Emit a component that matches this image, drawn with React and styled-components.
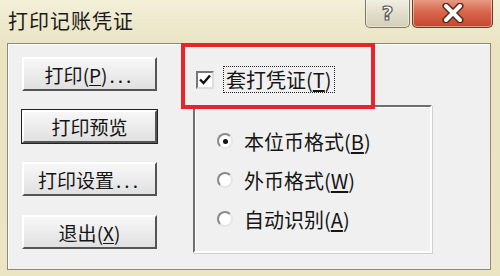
import styled, { createGlobalStyle } from "styled-components"

const GlobalStyle = createGlobalStyle`
  html, body {
    margin: 0;
    padding: 0;
    width: 500px;
    height: 276px;
    overflow: hidden;
    background: #ece6c4;
  }
  * { box-sizing: border-box; }
`

const font = `"Noto Sans CJK SC", "Noto Sans", sans-serif`

const Window = styled.div`
  position: relative;
  width: 500px;
  height: 276px;
  display: flex;
  flex-direction: column;
  background: linear-gradient(180deg, #f3efd9 0%, #e9e3c0 18%, #ebe5c4 100%);
  font-family: ${font};
  color: #151515;
`

const TitleBar = styled.div`
  height: 43px;
  display: flex;
  align-items: flex-start;
  justify-content: space-between;
  padding: 0 7px 0 8px;
`

const Title = styled.div`
  align-self: center;
  font-size: 20px;
  letter-spacing: 1px;
  margin-top: -2px;
  color: #1a1a1a;
`

const Caption = styled.div`
  display: flex;
  gap: 2px;
  margin-top: -2px;
`

const CapButton = styled.div`
  width: ${p => p.$w}px;
  height: 30px;
  display: flex;
  align-items: center;
  justify-content: center;
  border: 1px solid ${p => (p.$close ? "#6b3a2c" : "#7b7866")};
  border-top: none;
  border-radius: 0 0 5px 5px;
  background: ${p =>
    p.$close
      ? "linear-gradient(180deg, #e9a28c 0%, #d9694f 45%, #c4462c 100%)"
      : "linear-gradient(180deg, #f3f1e6 0%, #e2dfcc 50%, #d3ceb7 100%)"};
  box-shadow: inset 0 0 0 1px rgba(255,255,255,0.45);
`

const Help = styled.span`
  font-family: "DejaVu Sans", sans-serif;
  font-weight: bold;
  font-size: 20px;
  color: #fff;
  -webkit-text-stroke: 1.2px #5a5a5a;
  line-height: 1;
`

const Client = styled.div`
  flex: 1;
  margin: 0 9px 6px 7px;
  border: 1px solid #8b8a7c;
  background: #f0f0f0;
  display: flex;
  padding: 13px 0 0 14px;
  box-shadow: inset 1px 1px 0 #fff;
`

const ButtonColumn = styled.div`
  width: 135px;
  display: flex;
  flex-direction: column;
  gap: 19px;
`

const Button = styled.div`
  height: ${p => (p.$default ? 33 : 34)}px;
  display: flex;
  align-items: center;
  justify-content: center;
  font-size: 19px;
  background: linear-gradient(180deg, #f7f7f7 0%, #ececec 50%, #e0e0e0 100%);
  border: 2px solid;
  border-color: #ffffff #555 #555 #ffffff;
  outline: ${p => (p.$default ? "1px solid #222" : "none")};
  white-space: nowrap;

  u {
    text-decoration: underline;
    text-underline-offset: 2px;
  }
`

const Dots = styled.span`
  letter-spacing: 3px;
  margin-left: 2px;
`

const Options = styled.div`
  display: flex;
  flex-direction: column;
  margin-left: 36px;
`

const CheckRow = styled.div`
  display: flex;
  align-items: center;
  gap: 9px;
  margin: 9px 0 0 3px;
  height: 27px;
`

const Box = styled.div`
  width: 18px;
  height: 18px;
  background: #fff;
  border: 2px solid;
  border-color: #777 #ddd #ddd #777;
  display: flex;
  align-items: center;
  justify-content: center;
`

const Focus = styled.span`
  font-size: 20px;
  line-height: 25px;
  padding: 0 2px;
  border: 1px dotted #222;
  white-space: nowrap;

  u { text-underline-offset: 2px; }
`

const Group = styled.div`
  width: 239px;
  height: 148px;
  margin-top: 12px;
  border: 2px solid;
  border-color: #6f6f6f #fdfdfd #fdfdfd #6f6f6f;
  box-shadow: 1px 1px 0 #cfcfcf, inset 1px 1px 0 #fff;
  display: flex;
  flex-direction: column;
  gap: 15px;
  padding: 22px 0 0 22px;
`

const RadioRow = styled.div`
  display: flex;
  align-items: center;
  gap: 11px;
  height: 24px;
  font-size: 20px;
  white-space: nowrap;

  u { text-underline-offset: 2px; }
`

const Radio = styled.div`
  width: 16px;
  height: 16px;
  border-radius: 50%;
  background: #fff;
  border: 2px solid;
  border-color: #8a8a8a #e6e6e6 #e6e6e6 #8a8a8a;
  display: flex;
  align-items: center;
  justify-content: center;

  &::after {
    content: "";
    width: 5px;
    height: 5px;
    border-radius: 50%;
    background: ${p => (p.$on ? "#111" : "transparent")};
  }
`

const Mark = styled.div`
  position: absolute;
  left: 181px;
  top: 43px;
  width: 194px;
  height: 66px;
  border: 4px solid #e8232a;
  pointer-events: none;
`

const Mnemonic = ({ k }) => (
  <span>
    (<u>{k}</u>)
  </span>
)

const Option = ({ on, text, k }) => (
  <RadioRow>
    <Radio $on={on} />
    <span>
      {text}
      <Mnemonic k={k} />
    </span>
  </RadioRow>
)

export default function App() {
  return (
    <>
      <GlobalStyle />
      <Window>
        <TitleBar>
          <Title>打印记账凭证</Title>
          <Caption>
            <CapButton $w={45}>
              <Help>?</Help>
            </CapButton>
            <CapButton $w={81} $close>
              <svg width="26" height="20" viewBox="0 0 26 20">
                <path d="M6 3 L20 17 M20 3 L6 17" stroke="#5a2a20" strokeWidth="7" strokeLinecap="round" />
                <path d="M6 3 L20 17 M20 3 L6 17" stroke="#fff" strokeWidth="4" strokeLinecap="round" />
              </svg>
            </CapButton>
          </Caption>
        </TitleBar>
        <Client>
          <ButtonColumn>
            <Button>
              打印<Mnemonic k="P" />
              <Dots>...</Dots>
            </Button>
            <Button $default>打印预览</Button>
            <Button>
              打印设置<Dots>...</Dots>
            </Button>
            <Button>
              退出<Mnemonic k="X" />
            </Button>
          </ButtonColumn>
          <Options>
            <CheckRow>
              <Box>
                <svg width="12" height="11" viewBox="0 0 12 11">
                  <path d="M1 5.5 L4.5 9 L11 1.5" fill="none" stroke="#111" strokeWidth="2.4" />
                </svg>
              </Box>
              <Focus>
                套打凭证<Mnemonic k="T" />
              </Focus>
            </CheckRow>
            <Group>
              <Option on text="本位币格式" k="B" />
              <Option text="外币格式" k="W" />
              <Option text="自动识别" k="A" />
            </Group>
          </Options>
        </Client>
        <Mark />
      </Window>
    </>
  )
}
